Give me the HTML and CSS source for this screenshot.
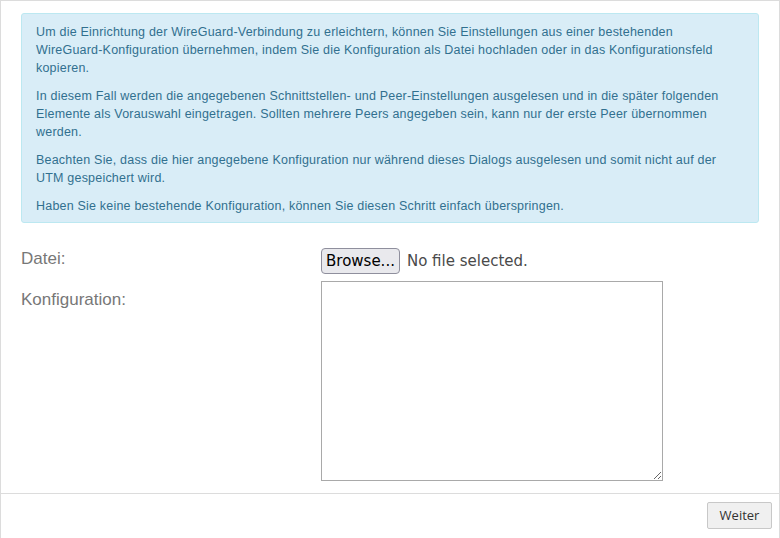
FILE: index.html
```html
<!DOCTYPE html>
<html lang="de">
<head>
<meta charset="utf-8">
<title>WireGuard-Konfiguration</title>
<link rel="stylesheet" href="styles.css">
</head>
<body>
<div class="dialog">
  <div class="dialog-body">
    <div class="alert-info">
      <p>Um die Einrichtung der WireGuard-Verbindung zu erleichtern, können Sie Einstellungen aus einer bestehenden WireGuard-Konfiguration übernehmen, indem Sie die Konfiguration als Datei hochladen oder in das Konfigurationsfeld kopieren.</p>
      <p>In diesem Fall werden die angegebenen Schnittstellen- und Peer-Einstellungen ausgelesen und in die später folgenden Elemente als Vorauswahl eingetragen. Sollten mehrere Peers angegeben sein, kann nur der erste Peer übernommen werden.</p>
      <p>Beachten Sie, dass die hier angegebene Konfiguration nur während dieses Dialogs ausgelesen und somit nicht auf der UTM gespeichert wird.</p>
      <p>Haben Sie keine bestehende Konfiguration, können Sie diesen Schritt einfach überspringen.</p>
    </div>
    <div class="form-row row-file">
      <label class="form-label" for="cfg-file">Datei:</label>
      <div class="file-input">
        <button type="button" class="browse-btn" id="cfg-file">Browse...</button>
        <span class="file-status">No file selected.</span>
      </div>
    </div>
    <div class="form-row">
      <label class="form-label label-top" for="cfg-text">Konfiguration:</label>
      <textarea class="cfg-text" id="cfg-text"></textarea>
    </div>
  </div>
  <div class="dialog-footer">
    <button type="button" class="btn-next">Weiter</button>
  </div>
</div>
</body>
</html>
```
FILE: styles.css
```css
* { box-sizing: border-box; }

html, body {
  margin: 0;
  padding: 0;
  background: #fff;
}

.dialog {
  width: 780px;
  height: 560px;
  border: 1px solid #dcdcdc;
  display: flex;
  flex-direction: column;
}

.dialog-body {
  padding: 12px 20px 12px 20px;
}

.alert-info {
  background: #d9edf7;
  border: 1px solid #bce8f1;
  border-radius: 3px;
  color: #31708f;
  font-family: "Liberation Sans", Arial, sans-serif;
  font-size: 12.5px;
  letter-spacing: 0.2px;
  line-height: 18px;
  padding: 9px 20px 7px 14px;
}

.alert-info p {
  margin: 0 0 10px 0;
}

.alert-info p:last-child {
  margin-bottom: 0;
}

.form-row {
  display: flex;
  align-items: flex-start;
}

.row-file {
  margin-top: 25px;
  margin-bottom: 7px;
}

.form-label {
  width: 300px;
  flex: none;
  font-family: "Liberation Sans", Arial, sans-serif;
  font-size: 17px;
  line-height: 20px;
  color: #777;
  padding-top: 1px;
}

.label-top {
  padding-top: 9px;
}

.file-input {
  display: flex;
  align-items: center;
  gap: 7px;
}

.browse-btn {
  height: 26px;
  padding: 0 4px;
  font-family: "DejaVu Sans", sans-serif;
  font-size: 15px;
  color: #000;
  background: #e9e9ed;
  border: 1px solid #8f8f9d;
  border-radius: 4px;
}

.file-status {
  font-family: "DejaVu Sans", sans-serif;
  font-size: 15px;
  color: #4a4a4a;
}

.cfg-text {
  width: 342px;
  height: 200px;
  border: 1px solid #a9a9a9;
  margin: 0;
  resize: both;
  font-family: "Liberation Mono", monospace;
}

.dialog-footer {
  border-top: 1px solid #dcdcdc;
  display: flex;
  justify-content: flex-end;
  padding: 8px 7px;
}

.btn-next {
  width: 65px;
  height: 27px;
  font-family: "Open Sans", "DejaVu Sans", sans-serif;
  font-size: 13px;
  line-height: 17px;
  color: #333;
  background: #f0f0f0;
  border: 1px solid #c8c8c8;
  border-radius: 2px;
}
```
